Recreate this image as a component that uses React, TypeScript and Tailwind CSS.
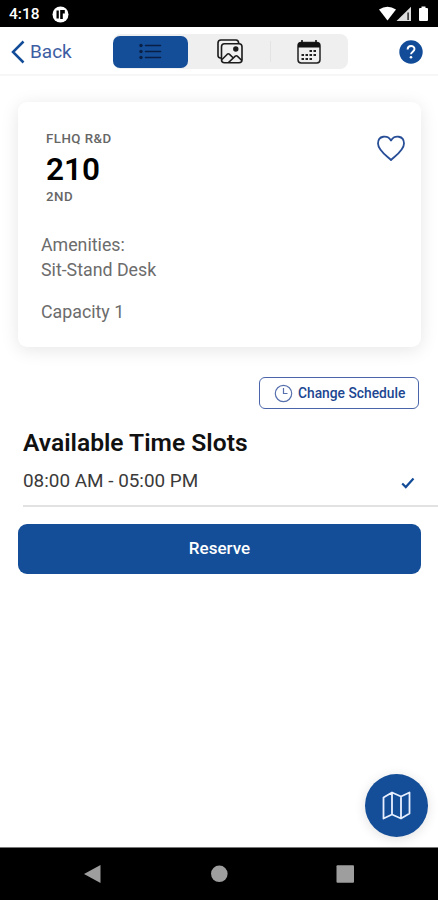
import React from "react";

const StatusBar = () => (
  <div className="flex h-[27px] shrink-0 items-center justify-between bg-black pl-[9px] pr-[9px] text-white">
    <div className="flex items-center gap-[12px]">
      <span className="pt-[2px] text-[15.500px] font-medium leading-[27px]">4:18</span>
      <svg className="mt-px" width="17" height="17" viewBox="0 0 17 17">
        <circle cx="8.500" cy="8.500" r="8" fill="#fff" />
        <path d="M4.500 4.500h2.300v8H4.500zM8.200 4h4.600v3.500h-2v5.500H8.200z" fill="#000" />
      </svg>
    </div>
    <svg width="50" height="16" viewBox="0 0 50 16">
      <path d="M0 3.500Q8.500-2 17 3.500L8.500 14.500Z" fill="#fff" />
      <path d="M17.500 15 32 .8V15Z" fill="#ddd" />
      <path d="M28.300 6.500h1.600V14h-1.600z" fill="#333" />
      <path d="M42.500.5h4v1.500h1.500q1 0 1 1V14q0 1-1 1h-7q-1 0-1-1V3q0-1 1-1h1.500Z" fill="#fff" />
    </svg>
  </div>
);

const ListIcon = () => (
  <svg width="23" height="17" viewBox="0 0 23 17">
    <g fill="#0a1f45">
      <circle cx="2" cy="2.500" r="1.700" />
      <circle cx="2" cy="8.500" r="1.700" />
      <circle cx="2" cy="14.500" r="1.700" />
    </g>
    <path d="M6.500 2.500h15M6.500 8.500h15M6.500 14.500h15" stroke="#0a1f45" strokeWidth="1.500" strokeLinecap="round" />
  </svg>
);

const ImagesIcon = () => (
  <svg width="26" height="25" viewBox="0 0 26 25" fill="none" stroke="#1a1a1a" strokeWidth="1.600" strokeLinejoin="round">
    <path d="M4 19H3.500q-2.500-.2-2.500-2.500V4Q1 1 4 1h15q2.500 0 2.800 3.500" />
    <rect x="4.500" y="4.800" width="20.500" height="19" rx="3" />
    <path d="m5 20.500 5.300-5.300q1-.8 2 0l3.500 3.300M11.500 23.500l6.800-6.300q1-.8 2 0l4.500 4.300" />
    <circle cx="18.800" cy="10" r="1.900" fill="#1a1a1a" />
  </svg>
);

const CalendarIcon = () => (
  <svg width="24" height="24" viewBox="0 0 24 24">
    <rect x="1" y="2.500" width="22" height="20.500" rx="3.200" fill="none" stroke="#222" strokeWidth="1.500" />
    <path d="M1 7.500V5.500q0-3 3-3h16q3 0 3 3v2Z" fill="#111" />
    <path d="M5 .5v3M19 .5v3" stroke="#111" strokeWidth="1.600" strokeLinecap="round" />
    <g stroke="#222" strokeWidth="2.200" strokeDasharray="2.500 1.500">
      <path d="M12.500 11h6.500M4.500 15h14.500M4.500 19h10.500" />
    </g>
  </svg>
);

const Header = () => (
  <div className="flex h-[49px] shrink-0 items-center border-b-2 border-[#f7f7f7] bg-white pt-[2px]">
    <div className="flex w-[113px] items-center pl-[11px] text-[#3d5ea3]">
      <svg width="14" height="24" viewBox="0 0 14 24">
        <path d="M12.500 1.500 2 12l10.500 10.500" fill="none" stroke="#124c98" strokeWidth="2.500" />
      </svg>
      <span className="pl-[5px] text-[19px] leading-6">Back</span>
    </div>
    <div className="flex h-[35px] w-[235px] items-center rounded-[8px] bg-[#efefef]">
      <div className="flex h-[32px] w-[75px] items-center justify-center rounded-[7px] bg-[#144e98]">
        <ListIcon />
      </div>
      <div className="flex w-[82px] justify-center pl-[2px]">
        <ImagesIcon />
      </div>
      <div className="h-[21px] w-px bg-[#e3e3e3]" />
      <div className="flex w-[77px] justify-center pr-px">
        <CalendarIcon />
      </div>
    </div>
    <div className="flex flex-1 justify-end pr-[15px]">
      <svg width="24" height="24" viewBox="0 0 24 24">
        <circle cx="12" cy="12" r="11.700" fill="#124c98" />
        <path d="M8.600 9.500c0-4.600 6.900-4.400 6.900-.5 0 2.500-3.500 2.800-3.500 5.300" fill="none" stroke="#fff" strokeWidth="1.900" />
        <circle cx="12" cy="17.300" r="1.300" fill="#fff" />
      </svg>
    </div>
  </div>
);

const DeskCard = () => (
  <div className="mx-[18px] mt-[26px] flex h-[245px] w-[403px] shrink-0 justify-between rounded-[9px] bg-white pt-[29px] pr-[15px] pl-[23px] shadow-[0_3px_18px_rgba(0,0,0,0.1)]">
    <div>
      <div className="pl-[5px] font-medium text-[#666]">
        <p className="text-[13.300px] leading-4 tracking-[0.450px]">FLHQ R&amp;D</p>
        <p className="pt-1 text-[31.500px] font-semibold leading-[38px] text-black">210</p>
        <p className="text-[13.300px] leading-4 tracking-[0.450px]">2ND</p>
      </div>
      <div className="pt-[27px] text-[17.800px] leading-[25px] text-[#6c6c6c]">
        <p>Amenities:</p>
        <p>Sit-Stand Desk</p>
        <p className="pt-[17px]">Capacity 1</p>
      </div>
    </div>
    <svg className="mt-[3px]" width="30" height="28" viewBox="0 0 30 28">
      <path d="M15 26C11 22 2 16.500 2 9.500 2 1.500 11.500.5 15 6.500 18.500.5 28 1.500 28 9.500c0 7-9 12.500-13 16.500Z" fill="none" stroke="#284e97" strokeWidth="1.800" strokeLinejoin="round" />
    </svg>
  </div>
);

const TimeSlots = () => (
  <div className="flex flex-col">
    <button className="mt-[30px] mr-[19px] flex h-[32px] w-[160px] items-center self-end rounded-[6px] border border-[#4a65aa] pl-[14px] text-[#204691]">
      <svg width="19" height="19" viewBox="0 0 19 19" fill="none" stroke="#5670ad" strokeWidth="1.200">
        <circle cx="9.500" cy="9.500" r="8.200" />
        <path d="M9.500 4v5.500h4" />
      </svg>
      <span className="pl-[5px] text-[13.800px] font-medium whitespace-nowrap">Change Schedule</span>
    </button>
    <h1 className="mt-[19px] pl-[23px] text-[24.600px] font-semibold leading-[30px] text-[#111]">Available Time Slots</h1>
    <div className="ml-[23px] flex h-[48.500px] items-center justify-between border-b-2 border-[#e2e2e2] pr-[23px]">
      <span className="pb-px text-[18.900px] leading-6 text-[#3a3a3a]">08:00 AM - 05:00 PM</span>
      <svg className="mt-[3px]" width="14" height="12" viewBox="0 0 14 12">
        <path d="m1.200 6.500 3.600 3.600L12.500 1.500" fill="none" stroke="#124c98" strokeWidth="2.200" />
      </svg>
    </div>
    <button className="mx-[18px] mt-[17px] h-[50px] w-[403px] rounded-[9px] bg-[#144e98] text-[17px] font-medium text-white">
      Reserve
    </button>
  </div>
);

const NavBar = () => (
  <div className="flex h-[53px] shrink-0 items-center border-t border-[#777] bg-black pl-[84px]">
    <svg width="272" height="20" viewBox="0 0 272 20" fill="#9e9e9e">
      <path d="M16.500 1v18L0 10Z" />
      <circle cx="135.300" cy="9.800" r="8.300" />
      <rect x="252.500" y="1.300" width="17.500" height="17.500" rx="1" />
    </svg>
  </div>
);

const App = () => {
  return (
    <div className="relative flex h-[900px] w-[438px] flex-col overflow-hidden bg-white font-['Roboto',sans-serif]">
      <StatusBar />
      <Header />
      <DeskCard />
      <TimeSlots />
      <div className="flex-1" />
      <button className="absolute top-[774px] left-[365px] flex size-[63px] items-center justify-center rounded-full bg-[#144e98] shadow-[0_2px_12px_rgba(0,0,0,0.12)]">
        <svg width="29" height="29" viewBox="0 0 29 29" fill="none" stroke="#e8f0ff" strokeWidth="1.800" strokeLinejoin="round">
          <path d="M1.500 6.500 10 1.500l9 4 8.500-4v21l-8.500 5-9-4-8.500 4ZM10 1.500v22M19 5.500v22" />
        </svg>
      </button>
      <NavBar />
    </div>
  );
};

export default App;
